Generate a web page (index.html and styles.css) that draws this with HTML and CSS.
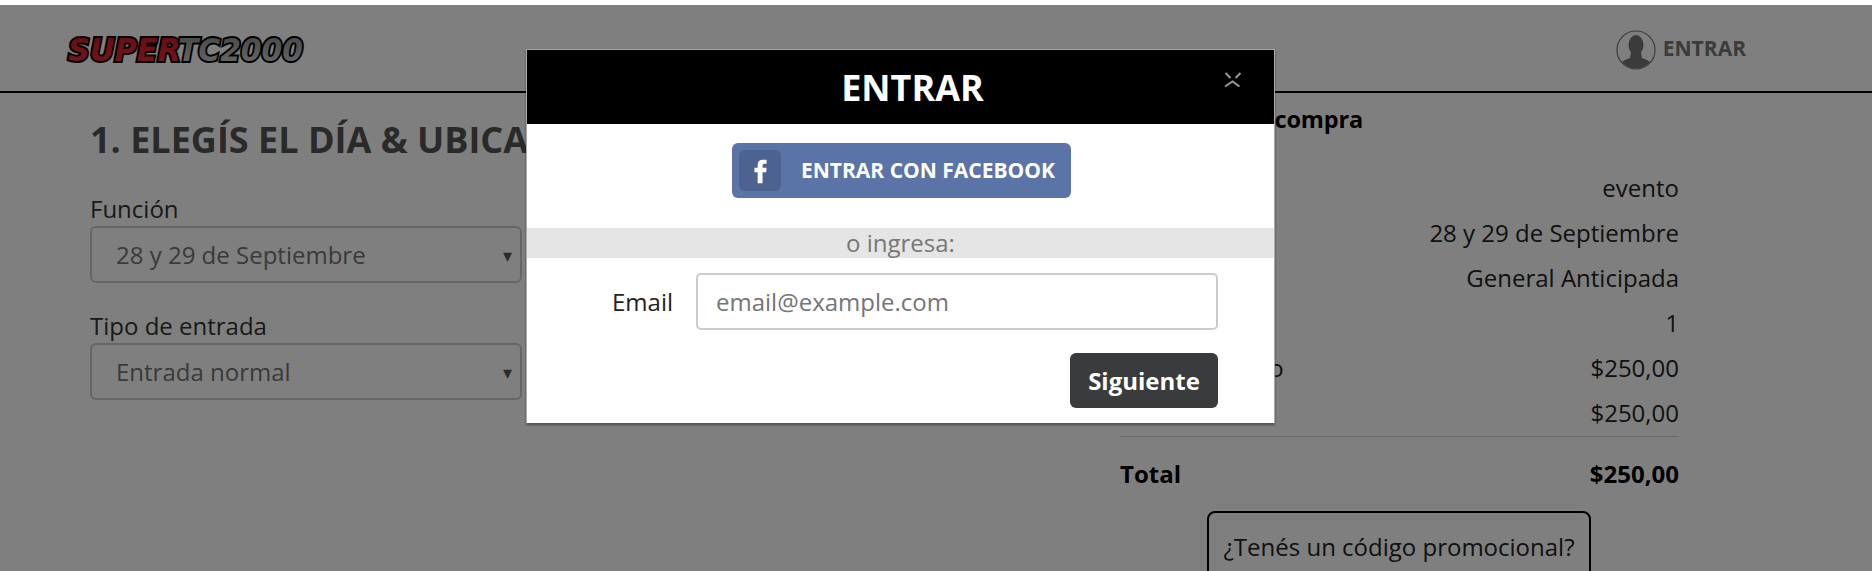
FILE: index.html
```html
<!DOCTYPE html>
<html lang="es">
<head>
  <meta charset="UTF-8">
  <title>Super TC2000 - Entradas</title>
  <link rel="stylesheet" href="styles.css">
</head>

<body>
  <header class="topbar">
    <a class="logo">
      <svg width="244" height="35" viewBox="0 0 244 35">
        <defs>
          <linearGradient id="logoRed" x1="0" y1="0" x2="0" y2="1">
            <stop offset="0" stop-color="#c81a2a"/>
            <stop offset="1" stop-color="#f02a38"/>
          </linearGradient>
          <linearGradient id="logoGrey" x1="0" y1="0" x2="0" y2="1">
            <stop offset="0" stop-color="#888"/>
            <stop offset="1" stop-color="#d8d8d8"/>
          </linearGradient>
        </defs>
        <text class="logo-text" x="5" y="29" textLength="113" lengthAdjust="spacingAndGlyphs" fill="url(#logoRed)">SUPER</text>
        <text class="logo-text" x="115" y="29" textLength="125" lengthAdjust="spacingAndGlyphs" fill="url(#logoGrey)">TC2000</text>
      </svg>
    </a>
    <a class="login-link">
      <svg class="login-icon" width="40" height="40" viewBox="0 0 40 40">
        <defs><clipPath id="userClip"><circle cx="20" cy="20" r="18.5"/></clipPath></defs>
        <circle cx="20" cy="20" r="19" fill="none" stroke="#777" stroke-width="1.2"/>
        <g clip-path="url(#userClip)" fill="#777">
          <ellipse cx="20" cy="15" rx="7.5" ry="10"/>
          <path d="M15 22 L25 22 L26 28 Q33 30 36 34 L36 40 L4 40 L4 34 Q7 30 14 28 Z"/>
        </g>
      </svg>
      ENTRAR
    </a>
  </header>

  <main class="checkout">
    <section class="steps">
      <h2>1. ELEGÍS EL DÍA &amp; UBICACIÓN</h2>
      <label class="field-label">Función</label>
      <div class="select-box"><span>28 y 29 de Septiembre</span><span class="select-arrow">▾</span></div>
      <label class="field-label">Tipo de entrada</label>
      <div class="select-box"><span>Entrada normal</span><span class="select-arrow">▾</span></div>
    </section>

    <aside class="summary">
      <h3>Detalle de tu compra</h3>
      <div class="summary-row"><span></span><span>evento</span></div>
      <div class="summary-row"><span></span><span>28 y 29 de Septiembre</span></div>
      <div class="summary-row"><span></span><span>General Anticipada</span></div>
      <div class="summary-row"><span></span><span>1</span></div>
      <div class="summary-row"><span>Precio unitario</span><span>$250,00</span></div>
      <div class="summary-row"><span></span><span>$250,00</span></div>
      <div class="summary-row total"><span>Total</span><span>$250,00</span></div>
      <button class="promo-button">¿Tenés un código promocional?</button>
    </aside>
  </main>

  <div class="overlay">
    <div class="modal">
      <div class="modal-head">
        <h2>ENTRAR</h2>
        <svg class="modal-close" width="18" height="16" viewBox="0 0 18 16">
          <path d="M1.5 1 L6.5 6 M16.5 1 L11.5 6 M1 14.5 L8.5 9.5 L15.5 14.5" fill="none" stroke="#999" stroke-width="2"/>
        </svg>
      </div>
      <div class="modal-body">
        <button class="fb-button">
          <span class="fb-square">
            <svg width="13" height="26" viewBox="0 0 16 30">
              <path d="M4.5 30 L4.5 16.5 L0.5 16.5 L0.5 11 L4.5 11 L4.5 7.5 Q4.5 1 11 1 L15.5 1 L15.5 6 L13 6 Q10.5 6 10.5 8.5 L10.5 11 L15.5 11 L15 16.5 L10.5 16.5 L10.5 30 Z" fill="#fff"/>
            </svg>
          </span>
          ENTRAR CON FACEBOOK
        </button>
        <div class="or-band">o ingresa:</div>
        <div class="email-row">
          <label>Email</label>
          <input type="text" placeholder="email@example.com">
        </div>
        <div class="next-row">
          <button class="next-button">Siguiente</button>
        </div>
      </div>
    </div>
  </div>
</body>
</html>
```

FILE: styles.css
```css
html, body
{
  margin: 0;
  height: 571px;
  overflow: hidden;
}
body
{
  font-family: "Open Sans", sans-serif;
  background-color: #fff;
  position: relative;
}
.topbar
{
  margin-top: 5px;
  height: 86px;
  border-bottom: 2px solid #000;
  display: flex;
  align-items: center;
  justify-content: space-between;
  padding: 0 126px 0 63px;
}
.logo
{
  display: flex;
  margin-top: 2px;
}
.logo svg
{
  overflow: visible;
}
.logo-text
{
  font-family: "DejaVu Sans", sans-serif;
  font-weight: bold;
  font-style: italic;
  font-size: 32px;
  stroke: #000;
  stroke-width: 4px;
  paint-order: stroke;
}
.login-link
{
  display: flex;
  align-items: center;
  gap: 7px;
  font-size: 21px;
  font-weight: bold;
  color: #777;
}
.login-icon
{
  margin-top: 3px;
}
.checkout
{
  display: flex;
  justify-content: space-between;
  padding: 0 193px 0 90px;
}
.steps
{
  width: 432px;
}
.steps h2
{
  margin: 25px 0 30px 0;
  font-size: 36px;
  line-height: 44px;
  white-space: nowrap;
  color: #555;
}
.field-label
{
  display: block;
  font-size: 24px;
  line-height: 34px;
  color: #333;
}
.select-box
{
  box-sizing: border-box;
  height: 57px;
  margin-bottom: 26px;
  padding: 0 8px 0 24px;
  border: 2px solid #ccc;
  border-radius: 6px;
  display: flex;
  align-items: center;
  justify-content: space-between;
  font-size: 24px;
  color: #757575;
}
.select-arrow
{
  font-size: 18px;
  color: #555;
}
.summary
{
  width: 559px;
}
.summary h3
{
  margin: 10px 0 30px 0;
  font-size: 23.5px;
  letter-spacing: -0.15px;
  line-height: 32px;
  white-space: nowrap;
  color: #000;
}
.summary-row
{
  display: flex;
  justify-content: space-between;
  height: 45px;
  align-items: center;
  font-size: 24px;
  color: #222;
}
.summary-row.total
{
  margin-top: 1px;
  border-top: 1px solid #d4d4d4;
  height: 73px;
  font-weight: bold;
  color: #000;
}
.promo-button
{
  display: block;
  margin: 1px 0 0 87px;
  width: 384px;
  height: 70px;
  padding: 0;
  background: none;
  border: 2px solid #000;
  border-radius: 8px;
  font-family: "Open Sans", sans-serif;
  font-size: 24px;
  color: #222;
}
.overlay
{
  position: absolute;
  top: 5px;
  left: 0;
  right: 0;
  bottom: 0;
  background-color: rgba(0, 0, 0, 0.5);
}
.modal
{
  position: absolute;
  left: 526px;
  top: 44px;
  width: 749px;
  border: 1px solid #aaa;
  border-bottom-color: #555;
  background-color: #fff;
  box-sizing: border-box;
  box-shadow: 0 1px 2px rgba(0, 0, 0, 0.4);
}
.modal-head
{
  position: relative;
  height: 74px;
  background-color: #000;
  display: flex;
  align-items: center;
  justify-content: center;
  padding-left: 24px;
}
.modal-head h2
{
  margin: 0;
  font-size: 36px;
  color: #fff;
}
.modal-close
{
  position: absolute;
  top: 22px;
  right: 32px;
}
.modal-body
{
  padding: 19px 0 15px;
  display: flex;
  flex-direction: column;
  align-items: center;
}
.fb-button
{
  box-sizing: border-box;
  width: 339px;
  height: 55px;
  margin-left: 2px;
  padding: 0 7px 2px;
  border: none;
  border-radius: 6px;
  background-color: #5b74a8;
  color: #fff;
  font-family: "Open Sans", sans-serif;
  font-size: 21px;
  font-weight: bold;
  white-space: nowrap;
  display: flex;
  align-items: center;
  gap: 20px;
}
.fb-square
{
  width: 42px;
  height: 41px;
  margin-top: 2px;
  border-radius: 6px;
  background-color: #4c6290;
  display: flex;
  align-items: center;
  justify-content: center;
}
.or-band
{
  align-self: stretch;
  margin: 30px 0 15px;
  height: 30px;
  line-height: 30px;
  background-color: #e5e5e5;
  text-align: center;
  font-size: 24px;
  color: #777;
}
.email-row
{
  align-self: stretch;
  display: flex;
  align-items: center;
  justify-content: flex-end;
  gap: 23px;
  padding-right: 56px;
  font-size: 24px;
  color: #222;
}
.email-row input
{
  box-sizing: border-box;
  width: 522px;
  height: 57px;
  padding: 0 18px;
  border: 2px solid #ccc;
  border-radius: 5px;
  font-family: "Open Sans", sans-serif;
  font-size: 24px;
}
.email-row input::placeholder
{
  color: #757575;
}
.next-row
{
  align-self: stretch;
  display: flex;
  justify-content: flex-end;
  padding: 23px 56px 0 0;
}
.next-button
{
  width: 148px;
  height: 55px;
  border: none;
  border-radius: 6px;
  background-color: #3a3b3c;
  color: #fff;
  font-family: "Open Sans", sans-serif;
  font-size: 24px;
  font-weight: bold;
}
```
